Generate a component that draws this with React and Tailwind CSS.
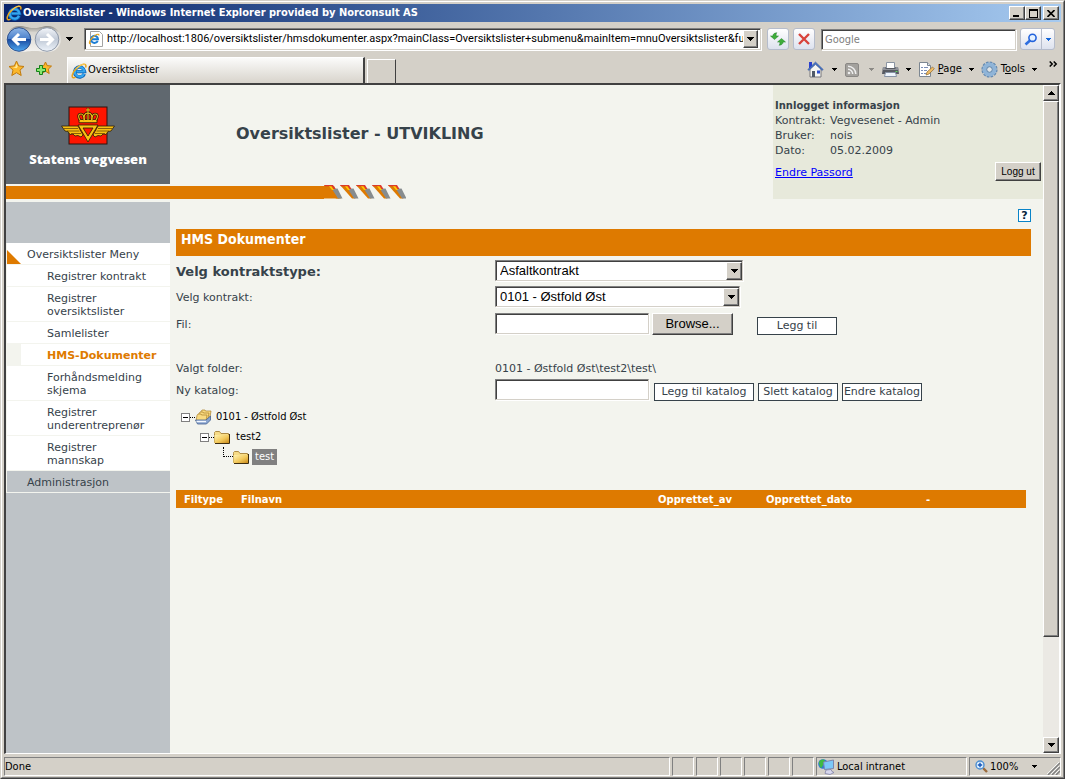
import { useState } from "react";
import clsx from "clsx";

const CHROME = "font-['DejaVu_Sans_Condensed','DejaVu_Sans',sans-serif]";
const RAISED =
  "border border-t-white border-l-white border-r-[#404040] border-b-[#404040] bg-[#d4d0c8] shadow-[inset_-1px_-1px_0_#808080]";
const SUNKEN =
  "border border-t-[#808080] border-l-[#808080] border-r-[#d4d0c8] border-b-[#d4d0c8] bg-white shadow-[inset_1px_1px_0_#404040,1px_1px_0_#ffffff]";
const CELL = "border border-t-[#808080] border-l-[#808080] border-r-white border-b-white";

const menu = [
  { label: "Registrer kontrakt" },
  { label: "Registrer oversiktslister" },
  { label: "Samlelister" },
  { label: "HMS-Dokumenter", active: true },
  { label: "Forhåndsmelding skjema" },
  { label: "Registrer underentreprenør" },
  { label: "Registrer mannskap" },
];

const Arrow = ({ className }) => (
  <svg className={clsx("shrink-0", className)} width="7" height="4" viewBox="0 0 7 4" shapeRendering="crispEdges">
    <path d="M0 0h7v1H6v1H5v1H4v1H3V3H2V2H1V1H0z" fill="currentColor" />
  </svg>
);

const SmallArrow = ({ className }) => (
  <svg className={clsx("shrink-0", className)} width="5" height="3" viewBox="0 0 5 3" shapeRendering="crispEdges">
    <path d="M0 0h5v1H4v1H3v1H2V2H1V1H0z" fill="currentColor" />
  </svg>
);

const IeLogo = ({ size = 16 }) => (
  <svg className="shrink-0" width={size} height={size} viewBox="0 0 16 16" fill="none">
    <path d="M13.300 10.800A5 5 0 1 1 13.600 8.600H5" stroke="#0a5fb4" strokeWidth="3.400" />
    <path d="M13 10.800A4.800 4.800 0 1 1 13.400 8.500H5.500" stroke="#35a6ee" strokeWidth="2.200" />
    <path d="M14.600 4.600C15.400 2.400 14.600.9 12.400 1.200 8.600 1.800 2.800 7 1.400 11.600.6 14.400 2 15.600 4.600 14.200" stroke="#e9a51c" strokeWidth="1.500" />
    <path d="M14.200 1.700C12.600.3 8.600 2.400 5.600 5.400" stroke="#ffe07a" strokeWidth=".8" />
  </svg>
);

const NavArrows = () => (
  <svg width="56" height="28" viewBox="0 0 56 28" className="shrink-0">
    <defs>
      <linearGradient id="pill" x1="0" y1="0" x2="0" y2="1">
        <stop offset="0" stopColor="#8f8d88" />
        <stop offset=".25" stopColor="#d8d6d0" />
        <stop offset="1" stopColor="#f4f3f0" />
      </linearGradient>
      <linearGradient id="back" x1="0" y1="0" x2="0" y2="1">
        <stop offset="0" stopColor="#8fb6e6" />
        <stop offset=".48" stopColor="#4a7fca" />
        <stop offset=".5" stopColor="#1a4ba0" />
        <stop offset="1" stopColor="#4fa8f0" />
      </linearGradient>
      <linearGradient id="fwd" x1="0" y1="0" x2="0" y2="1">
        <stop offset="0" stopColor="#f4f6fa" />
        <stop offset=".5" stopColor="#c0c9d6" />
        <stop offset="1" stopColor="#eef4fb" />
      </linearGradient>
    </defs>
    <path d="M13 1c7 0 8 2 15 2s8-2 14-2a13 13 0 0 1 0 26c-6 0-7-1-14-1s-8 1-15 1A13 13 0 0 1 13 1z" fill="url(#pill)" />
    <circle cx="13" cy="14.500" r="11.800" fill="url(#back)" stroke="#2c4f8c" />
    <circle cx="41" cy="14.500" r="11.800" fill="url(#fwd)" stroke="#8d97a8" />
    <path d="M20 14.500H8M13 9l-5.500 5.500L13 20" stroke="#fff" strokeWidth="3" fill="none" />
    <path d="M34 14.500h12M41 9l5.500 5.500L41 20" stroke="#fff" strokeWidth="3" fill="none" />
  </svg>
);

const Star = ({ add }) =>
  add ? (
    <svg width="17" height="17" viewBox="0 0 17 17" className="shrink-0">
      <path
        d="M10.500 2l1.700 3.600 4.300.5-3.200 3 .9 4.400-3.700-2.300-3.700 2.300.9-4.400-3.200-3 4.300-.5z"
        fill="#fbb72b"
        stroke="#c17a0c"
        strokeLinejoin="round"
      />
      <path d="M4.500 5.500h3v3h3v3h-3v3h-3v-3h-3v-3h3z" fill="#8be86f" stroke="#16801a" />
    </svg>
  ) : (
    <svg width="17" height="17" viewBox="0 0 17 17" className="shrink-0">
      <path
        d="M8.500 1l2.200 4.900 5.300.6-4 3.600 1.200 5.400-4.700-2.800-4.700 2.800L5 10.100 1 6.500l5.300-.6z"
        fill="#fbb72b"
        stroke="#c17a0c"
        strokeLinejoin="round"
      />
      <path d="M8.500 3.500l1.300 3.200-1.300 1.500-4-.8 2.800-.4z" fill="#ffe897" />
    </svg>
  );

const HouseIcon = () => (
  <svg width="17" height="17" viewBox="0 0 17 17">
    <path d="M2 1h3v6H2z" fill="#2a3fd0" />
    <path d="M3 8l5.500-5L14 8v8H3z" fill="#f5f5f2" stroke="#77777c" />
    <path d="M8.500 1l7.700 7.500-1 1-6.700-6.300-6.700 6.300-1-1z" fill="#4a78c8" stroke="#2b4a92" strokeWidth=".5" />
    <path d="M5 10h3v6H5z" fill="#4f5968" />
    <path d="M10 9.500h3v3h-3z" fill="#2f50d0" />
  </svg>
);

const FeedIcon = () => (
  <svg width="14" height="14" viewBox="0 0 14 14" fill="none">
    <rect x=".5" y=".5" width="13" height="13" rx="1.500" fill="#a3a19d" stroke="#8a8885" />
    <circle cx="4" cy="10" r="1.300" fill="#eee" />
    <path d="M3 6.300a4.700 4.700 0 0 1 4.700 4.700M3 3.200A7.800 7.800 0 0 1 10.800 11" stroke="#eee" strokeWidth="1.500" />
  </svg>
);

const PrinterIcon = () => (
  <svg width="17" height="16" viewBox="0 0 17 16">
    <path d="M4.500.5h8V7h-8z" fill="#fff" stroke="#8a94a2" />
    <path d="M1 5h3v1h9V5h3l1 7H0z" fill="#585b62" />
    <path d="M1 5h2.500v2h10V5H16l.5 3H.5z" fill="#8f9299" />
    <path d="M3.500 10.500h10l1 4h-12z" fill="#eef5fd" stroke="#8793a5" />
    <path d="M13.500 9h2v1h-2z" fill="#5fd75f" />
  </svg>
);

const PageIcon = () => (
  <svg width="17" height="17" viewBox="0 0 17 17">
    <path d="M1.500 1.500h8l3 3v11h-11z" fill="#fff" stroke="#7d8792" />
    <path d="M9.500 1.500v3h3" fill="#dce4ee" stroke="#7d8792" />
    <path d="M3 6.500h2M6 6.500h4M3 9.500h2M6 9.500h3M3 12.500h2M6 12.500h2" stroke="#7c8fb8" />
    <path d="M8 14l1-3 5.500-5 1.800 1.800-5.300 5.200z" fill="#f1bd65" stroke="#8d672e" strokeWidth=".7" />
  </svg>
);

const GearIcon = () => (
  <svg width="17" height="17" viewBox="0 0 17 17" fill="none">
    <circle cx="8.500" cy="8.500" r="7" stroke="#6288b0" strokeWidth="2.200" strokeDasharray="2.600 1.060" />
    <circle cx="8.500" cy="8.500" r="5" stroke="#8fb4d8" strokeWidth="4" />
    <circle cx="8.500" cy="8.500" r="2.800" fill="#e0e4e6" stroke="#5580ac" />
  </svg>
);

const Emblem = () => (
  <svg width="54" height="40" viewBox="0 0 54 40">
    <rect x="8" y="1" width="38" height="37" fill="#ff1500" stroke="#2a1410" />
    <g fill="#f8c012" stroke="#2a1d0a" strokeWidth=".8">
      <path d="M.5 20H17l5 9-2 2-3-1.500-3 .5-2-2-3 .5-2-3-3-.5z" />
      <path d="M53.500 20H37l-5 9 2 2 3-1.500 3 .5 2-2 3 .5 2-3 3-.5z" />
      <path d="M17 19h20L27 36z" />
      <path d="M18 13.500h18v3.200H18z" />
    </g>
    <g fill="none" stroke="#2a1d0a" strokeWidth="2.600">
      <path d="M19 14c-2-3-2-6 1-6 2 0 3 3 3 6M35 14c2-3 2-6-1-6-2 0-3 3-3 6M23.500 14c-1-4 0-7 3.500-7s4.500 3 3.500 7M27 2v12" />
    </g>
    <g fill="none" stroke="#f8c012" strokeWidth="1.100">
      <path d="M19 14c-2-3-2-6 1-6 2 0 3 3 3 6M35 14c2-3 2-6-1-6-2 0-3 3-3 6M23.500 14c-1-4 0-7 3.500-7s4.500 3 3.500 7M27 2v12M25 4h4" />
    </g>
    <path d="M2.500 22.500H17M6 25h12.500M10 27.500h10M51.500 22.500H37M48 25H35.500M44 27.500H34" stroke="#6b4a05" strokeWidth=".8" />
    <path d="M22 22h10l-5 8z" fill="#ff1500" stroke="#2a1d0a" strokeWidth=".8" />
  </svg>
);

const Hatch = () => (
  <svg width="82" height="14" viewBox="0 0 82 14">
    <path d="M0 1h10l7 12.500H0z" fill="#de7a00" />
    {[0, 16, 32, 48, 64].map((x) => (
      <g key={x} transform={`translate(${x} 0)`}>
        <path d="M0 0h8l7.500 13.500H12z" fill="#de7a00" />
        <path d="M8 4l5.500-.5 5 10H14z" fill="#868c8f" />
        <path d="M0 0h9l2.500 4H9L6.500 1.300H1z" fill="#dc3a2c" />
        <path d="M5 1.300h2.500l2.500 3.700H8z" fill="#ffc800" />
      </g>
    ))}
  </svg>
);

const Folder = () => (
  <svg width="16" height="13" viewBox="0 0 16 13" className="shrink-0">
    <defs>
      <linearGradient id="folder" x1="0" y1="0" x2="1" y2="1">
        <stop offset="0" stopColor="#fff3b0" />
        <stop offset=".55" stopColor="#f2c95c" />
        <stop offset="1" stopColor="#c98a1a" />
      </linearGradient>
    </defs>
    <path d="M.5 2.500V1.500l1-1h4l1.500 2h7.500v9H.5z" fill="#f7dc86" stroke="#ae8c45" />
    <path d="M.5 4h14.500v8H.5z" fill="url(#folder)" />
    <path d="M15.500 3v9.500H1" stroke="#3c2c10" fill="none" />
  </svg>
);

const Folders = () => (
  <svg width="17" height="16" viewBox="0 0 17 16" className="shrink-0">
    <g fill="#f9da80" stroke="#a9802c" strokeWidth=".7">
      <path d="M6 2.500L7 1h3l.5 1H16l-1.500 9H5z" />
      <path d="M4 4.500L5 3h3l.5 1H14l-1.500 8H3z" />
      <path d="M2 6.500L3 5h3l.5 1H12l-1 6H1z" />
    </g>
    <path d="M.5 11h10.500l4.500-4v4l-4 4h-9z" fill="#8aa5d0" stroke="#44618f" strokeWidth=".8" />
    <path d="M1.500 12.500h9.500" stroke="#f4f8ff" strokeWidth="1.500" />
  </svg>
);

const Minus = () => (
  <button aria-label="Skjul" className="flex size-[9px] shrink-0 items-center justify-center border border-[#808080] bg-white">
    <span className="h-px w-[5px] bg-black" />
  </button>
);

const ToolButton = ({ label, children }) => (
  <button
    aria-label={label}
    className="flex size-[22px] items-center justify-center rounded-[3px] border border-[#b5bccb] bg-linear-to-b from-white via-[#eef0f6] to-[#dde2ee]"
  >
    {children}
  </button>
);

const TitleBar = () => (
  <div className="flex h-[18px] items-center bg-linear-to-r from-[#0a246a] to-[#a6caf0] pr-[2px] pl-[2px]">
    <IeLogo />
    <h1 className={clsx(CHROME, "ml-px flex-1 text-[11px] font-bold whitespace-nowrap text-white")}>
      Oversiktslister - Windows Internet Explorer provided by Norconsult AS
    </h1>
    <button aria-label="Minimer" className={clsx(RAISED, "flex h-[14px] w-4 items-end pb-[2px] pl-[3px]")}>
      <span className="h-[2px] w-[6px] bg-black" />
    </button>
    <button aria-label="Maksimer" className={clsx(RAISED, "flex h-[14px] w-4 items-center justify-center")}>
      <span className="h-[9px] w-[9px] border border-t-2 border-black" />
    </button>
    <button aria-label="Lukk" className={clsx(RAISED, "ml-[2px] flex h-[14px] w-4 items-center justify-center")}>
      <svg width="8" height="7" viewBox="0 0 8 7">
        <path d="M.5 0l7 7M7.500 0l-7 7" stroke="#000" strokeWidth="1.600" />
      </svg>
    </button>
  </div>
);

const AddressBar = () => (
  <div className={clsx(CHROME, "flex h-[34px] items-center pr-[6px] pl-[2px] text-[11px]")}>
    <NavArrows />
    <Arrow className="ml-1" />
    <div className={clsx(SUNKEN, "ml-[11px] flex h-[22px] min-w-0 flex-1 items-center py-[2px] pr-[2px] pl-[3px]")}>
      <svg width="16" height="16" viewBox="0 0 16 16" className="shrink-0" fill="none">
        <path d="M2.500.5h9l3 3v12h-12z" fill="#fff" stroke="#a3a3a3" />
        <path d="M9.700 9.800A3.500 3.500 0 1 1 10 8.200H3.500" stroke="#1d7dd2" strokeWidth="2" />
        <path d="M11 4.500C11 2 7 3.500 4 7s-3.500 6.500-1 5.500" stroke="#e9a51c" strokeWidth="1.200" />
      </svg>
      <input
        aria-label="Adresse"
        className="ml-[3px] min-w-0 flex-1 bg-transparent font-['Roboto',sans-serif] outline-none"
        defaultValue="http://localhost:1806/oversiktslister/hmsdokumenter.aspx?mainClass=Oversiktslister+submenu&mainItem=mnuOversiktslister&functionality=hms"
      />
      <button aria-label="Vis adresser" className={clsx(RAISED, "flex h-[18px] w-[15px] items-center justify-center")}>
        <Arrow />
      </button>
    </div>
    <div className="ml-[6px] flex gap-1">
      <ToolButton label="Oppdater">
        <svg width="16" height="14" viewBox="0 0 16 14">
          <path d="M4.500 7.500L.5 4h2.300C3 2 4.500.8 7 .8 6 1.500 6 2.500 6.200 4h2.300z" fill="#3fae3a" stroke="#23802a" strokeWidth=".5" />
          <path d="M11.500 6.500l4 3.500h-2.300c-.2 2-1.700 3.200-4.200 3.200 1-.7 1-1.700.8-3.200H7.500z" fill="#3fae3a" stroke="#23802a" strokeWidth=".5" />
        </svg>
      </ToolButton>
      <ToolButton label="Stopp">
        <svg width="12" height="12" viewBox="0 0 12 12">
          <path d="M1 1l10 10M11 1L1 11" stroke="#d8433b" strokeWidth="2.400" />
        </svg>
      </ToolButton>
    </div>
    <input
      aria-label="Google"
      placeholder="Google"
      className={clsx(SUNKEN, "ml-[6px] h-[21px] w-[195px] pl-[3px] outline-none placeholder:text-[#808080]")}
    />
    <div className="ml-1 flex h-[22px] rounded-[3px] border border-[#b5bccb] bg-linear-to-b from-white via-[#eef0f6] to-[#dde2ee]">
      <button aria-label="Søk" className="flex w-[20px] items-center justify-center">
        <svg width="14" height="13" viewBox="0 0 14 13" fill="none">
          <path d="M1.500 11.500L6 7.500" stroke="#2f6fe0" strokeWidth="2.600" />
          <circle cx="8.500" cy="4.800" r="3.600" fill="#e6f2ff" stroke="#2363dc" strokeWidth="1.600" />
        </svg>
      </button>
      <button aria-label="Søkevalg" className="flex w-[13px] items-center justify-center border-l border-[#b5bccb] text-[#1466d8]">
        <SmallArrow />
      </button>
    </div>
  </div>
);

const TabBar = () => (
  <div className={clsx(CHROME, "flex h-[27px] items-end text-[11px]")}>
    <div className="flex gap-[10px] pb-[6px] pl-1">
      <button aria-label="Favoritter"><Star /></button>
      <button aria-label="Legg til favoritt"><Star add /></button>
    </div>
    <button className="ml-[15px] flex h-[26px] w-[298px] items-center gap-px border-t border-r-2 border-l border-t-white border-r-[#404040] border-l-white bg-linear-to-b from-[#fbfbfa] to-[#d8d4cc] pl-[3px]">
      <IeLogo />
      Oversiktslister
    </button>
    <button
      aria-label="Ny fane"
      className="ml-[2px] h-[24px] w-[29px] border-t border-r border-l border-t-white border-r-[#404040] border-l-white"
    />
    <div className="ml-auto flex h-full items-center pr-[3px]">
      <button aria-label="Hjem" className="flex items-center gap-2">
        <HouseIcon />
        <SmallArrow />
      </button>
      <button aria-label="Feed" className="ml-2 flex items-center gap-[10px] text-[#8c8a86]">
        <FeedIcon />
        <SmallArrow />
      </button>
      <button aria-label="Skriv ut" className="ml-2 flex items-center gap-[7px]">
        <PrinterIcon />
        <SmallArrow />
      </button>
      <button className="ml-[7px] flex items-center gap-[3px]">
        <PageIcon />
        <span><u>P</u>age</span>
        <SmallArrow className="ml-1" />
      </button>
      <button className="ml-[7px] flex items-center gap-[3px]">
        <GearIcon />
        <span>T<u>o</u>ols</span>
        <SmallArrow className="ml-1" />
      </button>
      <button aria-label="Flere" className="mb-3 ml-3">
        <svg width="9" height="6" viewBox="0 0 9 6" fill="none">
          <path d="M.7.5L3.200 3 .7 5.500M4.700.5L7.200 3 4.700 5.500" stroke="#000" strokeWidth="1.500" />
        </svg>
      </button>
    </div>
  </div>
);

const PageHeader = () => (
  <header className="flex">
    <div className="flex min-w-0 flex-1 flex-col">
      <div className="flex h-[99px]">
        <div className="flex w-[164px] flex-col items-center bg-[#60686f] pt-[21px]">
          <Emblem />
          <span className="mt-[3px] font-['Open_Sans',sans-serif] text-[13px] leading-[20px] font-extrabold text-white">
            Statens vegvesen
          </span>
        </div>
        <h2 className="mt-[38px] ml-[66px] text-[16px] leading-[22px] font-bold">Oversiktslister - UTVIKLING</h2>
      </div>
      <div className="mt-px flex h-[14px] items-end">
        <div className="h-[13px] w-[318px] bg-[#de7a00]" />
        <Hatch />
      </div>
    </div>
    <div className="flex w-[270px] justify-between bg-[#e7e9db] pt-[13px] pl-[2px] text-[11px] leading-[15px]">
      <div>
        <p className="text-[10px] leading-[15px] font-bold">Innlogget informasjon</p>
        <dl className="grid grid-cols-[55px_auto]">
          <dt>Kontrakt:</dt>
          <dd>Vegvesenet - Admin</dd>
          <dt>Bruker:</dt>
          <dd>nois</dd>
          <dt>Dato:</dt>
          <dd>05.02.2009</dd>
        </dl>
        <a href="#passord" className="mt-[7px] block text-[#0000ff] underline">
          Endre Passord
        </a>
      </div>
      <button
        className={clsx(RAISED, "mt-16 mr-[2px] h-[19px] w-[46px] font-['Liberation_Sans',sans-serif] text-[10px] leading-4 text-black")}
      >
        Logg ut
      </button>
    </div>
  </header>
);

const Sidebar = () => (
  <nav className="w-[164px] shrink-0 bg-[#bec3c7] pt-[41px] text-[11px] leading-[13px]">
    <ul className="border-l border-[#f3f4ee] bg-white">
      <li className="flex border-b border-[#f3f4ee]">
        <svg width="14" height="21" viewBox="0 0 14 21">
          <path d="M0 7l14 14H0z" fill="#de7a00" />
        </svg>
        <a href="#meny" className="pt-[5px] pb-[3px] pl-[6px]">Oversiktslister Meny</a>
      </li>
      {menu.map((item) => (
        <li
          key={item.label}
          className={clsx(
            "border-b border-b-[#f3f4ee]",
            item.active ? "border-l-[14px] border-l-[#f3f4ee] pl-[26px]" : "pl-10"
          )}
        >
          <a href="#side" className={clsx("block pt-[5px] pb-[3px]", item.active ? "font-bold text-[#de7a00]" : "pr-4")}>
            {item.label}
          </a>
        </li>
      ))}
      <li className="border-b border-[#f3f4ee] bg-[#bec3c7] pt-[5px] pb-[3px] pl-5">
        <a href="#admin">Administrasjon</a>
      </li>
    </ul>
  </nav>
);

const Select = ({ id, className, options }) => (
  <div className={clsx(SUNKEN, "relative h-[21px]", className)}>
    <select
      id={id}
      className="size-full appearance-none bg-transparent pl-1 font-['Liberation_Sans',sans-serif] text-[13px] text-black outline-none"
    >
      {options.map((o) => (
        <option key={o}>{o}</option>
      ))}
    </select>
    <span
      className={clsx(RAISED, "pointer-events-none absolute top-px right-0 bottom-0 flex w-4 items-center justify-center text-black")}
    >
      <Arrow />
    </span>
  </div>
);

const FlatButton = ({ className, children }) => (
  <button className={clsx("h-[18px] border border-[#36424a] bg-white text-[11px] leading-4 whitespace-nowrap", className)}>
    {children}
  </button>
);

const DocumentForm = () => {
  const [katalog, setKatalog] = useState("");
  const [fil, setFil] = useState("");

  return (
    <form className="grid grid-cols-[319px_1fr] text-[11px]" onSubmit={(e) => e.preventDefault()}>
      <label htmlFor="type" className="flex h-[26px] items-center pt-[5px] text-[13px] font-bold">
        Velg kontraktstype:
      </label>
      <div className="pt-1">
        <Select id="type" className="w-[248px]" options={["Asfaltkontrakt", "Funksjonskontrakt"]} />
      </div>

      <label htmlFor="kontrakt" className="flex h-[26px] items-center pt-[6px]">Velg kontrakt:</label>
      <div className="pt-1">
        <Select id="kontrakt" className="w-[245px]" options={["0101 - Østfold Øst", "0102 - Østfold Vest"]} />
      </div>

      <label htmlFor="fil" className="flex h-7 items-center pt-[6px]">Fil:</label>
      <div className="flex items-start pt-[5px]">
        <input id="fil" className={clsx(SUNKEN, "h-[21px] w-[154px] px-1")} value={fil} onChange={(e) => setFil(e.target.value)} />
        <button
          className={clsx(RAISED, "ml-[3px] h-[22px] w-[81px] font-['Liberation_Sans',sans-serif] text-[13px] text-black")}
        >
          Browse...
        </button>
        <FlatButton className="mt-1 ml-6 w-20">Legg til</FlatButton>
      </div>

      <span className="flex h-[41px] items-end leading-[16px]">Valgt folder:</span>
      <span className="flex h-[41px] items-end leading-[16px]">0101 - Østfold Øst\test2\test\</span>

      <label htmlFor="katalog" className="flex h-[25px] items-center pt-1">Ny katalog:</label>
      <div className="flex h-[25px] items-start pt-[2px]">
        <input
          id="katalog"
          className={clsx(SUNKEN, "h-[21px] w-[154px] px-1")}
          value={katalog}
          onChange={(e) => setKatalog(e.target.value)}
        />
        <div className="mt-1 ml-[5px] flex gap-1">
          <FlatButton className="w-[100px]">Legg til katalog</FlatButton>
          <FlatButton className="w-20">Slett katalog</FlatButton>
          <FlatButton className="w-20">Endre katalog</FlatButton>
        </div>
      </div>
    </form>
  );
};

const FolderTree = () => (
  <ul className={clsx(CHROME, "pt-[5px] pl-[5px] text-[11px] leading-5 text-black")}>
    <li className="flex h-5 items-center">
      <Minus />
      <span className="w-[5px] border-t border-dotted border-black" />
      <Folders />
      <span className="ml-[4px]">0101 - Østfold Øst</span>
    </li>
    <li className="flex h-5 items-center pl-[19px]">
      <Minus />
      <span className="w-[5px] border-t border-dotted border-black" />
      <Folder />
      <span className="ml-[6px]">test2</span>
    </li>
    <li className="flex h-5 items-center pl-[42px]">
      <span className="mb-[10px] h-[10px] w-[10px] border-b border-l border-dotted border-black" />
      <Folder />
      <span className="ml-[3px] bg-[#808080] px-[3px] leading-4 text-white">test</span>
    </li>
  </ul>
);

const DocumentTable = () => (
  <table className="mt-[23px] w-full table-fixed text-[10px]">
    <thead>
      <tr className="h-[18px] bg-[#de7a00] text-left text-white">
        <th className="w-[57px] pl-2">Filtype</th>
        <th className="pl-2">Filnavn</th>
        <th className="w-[108px] pl-2">Opprettet_av</th>
        <th className="w-[160px] pl-2">Opprettet_dato</th>
        <th className="w-[108px] pl-2">-</th>
      </tr>
    </thead>
  </table>
);

const ScrollBar = () => (
  <div className="flex w-4 shrink-0 flex-col bg-[#ebe9e4]">
    <button aria-label="Rull opp" className={clsx(RAISED, "flex h-4 items-center justify-center")}>
      <Arrow className="rotate-180" />
    </button>
    <div className={clsx(RAISED, "h-[536px]")} />
    <button aria-label="Rull ned" className={clsx(RAISED, "mt-auto flex h-4 items-center justify-center")}>
      <Arrow />
    </button>
  </div>
);

const StatusBar = () => (
  <footer className={clsx(CHROME, "mt-[3px] flex h-[19px] gap-[2px] text-[11px] leading-[18px]")}>
    <div className={clsx(CELL, "flex-1")}>Done</div>
    {[1, 2, 3, 4, 5, 6].map((n) => (
      <div key={n} className={clsx(CELL, "w-[22px]")} />
    ))}
    <div className={clsx(CELL, "flex w-[151px] items-center gap-[2px] pl-px")}>
      <svg width="17" height="16" viewBox="0 0 17 16">
        <circle cx="5" cy="5" r="4.800" fill="#2b78d8" />
        <path d="M1 3c2-3 5-3 6-1S5 5 4 8 1 6 1 3z" fill="#3fba43" />
        <path d="M5.500 3l10-2v8.500l-9 1z" fill="#7cc8f8" stroke="#7b86ae" />
        <path d="M8 11l5-.5 1 2 2 1-4 2-5-1z" fill="#d8d8ee" stroke="#7778a0" strokeWidth=".7" />
      </svg>
      Local intranet
    </div>
    <div className={clsx(CELL, "flex w-[92px] items-center gap-[2px] pl-[5px]")}>
      <svg width="13" height="13" viewBox="0 0 13 13" fill="none">
        <path d="M8 8l4 4" stroke="#9a6a3c" strokeWidth="2.400" />
        <circle cx="5" cy="5" r="4" fill="#dff0ff" stroke="#4e8fd0" strokeWidth="1.400" />
        <path d="M5 2.800v4.400M2.800 5h4.400" stroke="#1554b8" strokeWidth="1.400" />
      </svg>
      100%
      <SmallArrow className="ml-3" />
      <svg width="13" height="13" viewBox="0 0 13 13" className="mt-auto ml-auto">
        <path d="M1 13L13 1M5 13l8-8M9 13l4-4" stroke="#808080" strokeWidth="1.500" />
        <path d="M0 12L12 0M4 12l8-8M8 12l4-4" stroke="#fff" strokeWidth=".8" />
      </svg>
    </div>
  </footer>
);

const App = () => {
  return (
    <div className="border border-t-[#d4d0c8] border-r-[#404040] border-b-[#404040] border-l-[#d4d0c8]">
      <div className="flex h-[calc(100vh-2px)] flex-col border border-t-white border-r-[#808080] border-b-[#808080] border-l-white bg-[#d4d0c8] p-[2px] pb-px text-black">
        <TitleBar />
        <AddressBar />
        <TabBar />
        <div className="flex min-h-0 flex-1 border-t-2 border-r-2 border-b border-l-2 border-t-[#404040] border-r-white border-b-white border-l-[#404040]">
          <div className="flex min-w-0 flex-1 flex-col overflow-hidden bg-[#f3f4ee] font-['DejaVu_Sans',sans-serif] text-[#36424a]">
            <PageHeader />
            <div className="mt-[3px] flex flex-1">
              <Sidebar />
              <main className="min-w-0 flex-1 pt-[7px] pr-3 pl-[6px]">
                <div className="flex justify-end">
                  <button
                    aria-label="Hjelp"
                    className="flex size-[13px] items-center justify-center border border-[#0a84c8] bg-white text-[11px] leading-none font-bold text-[#0a2740]"
                  >
                    ?
                  </button>
                </div>
                <h3 className={clsx(CHROME, "mt-[7px] h-[27px] bg-[#de7a00] pl-[5px] text-[14px] leading-[20px] font-bold text-white")}>
                  HMS Dokumenter
                </h3>
                <DocumentForm />
                <FolderTree />
                <div className="pr-[5px]">
                  <DocumentTable />
                </div>
              </main>
            </div>
          </div>
          <ScrollBar />
        </div>
        <StatusBar />
      </div>
    </div>
  );
};

export default App;
